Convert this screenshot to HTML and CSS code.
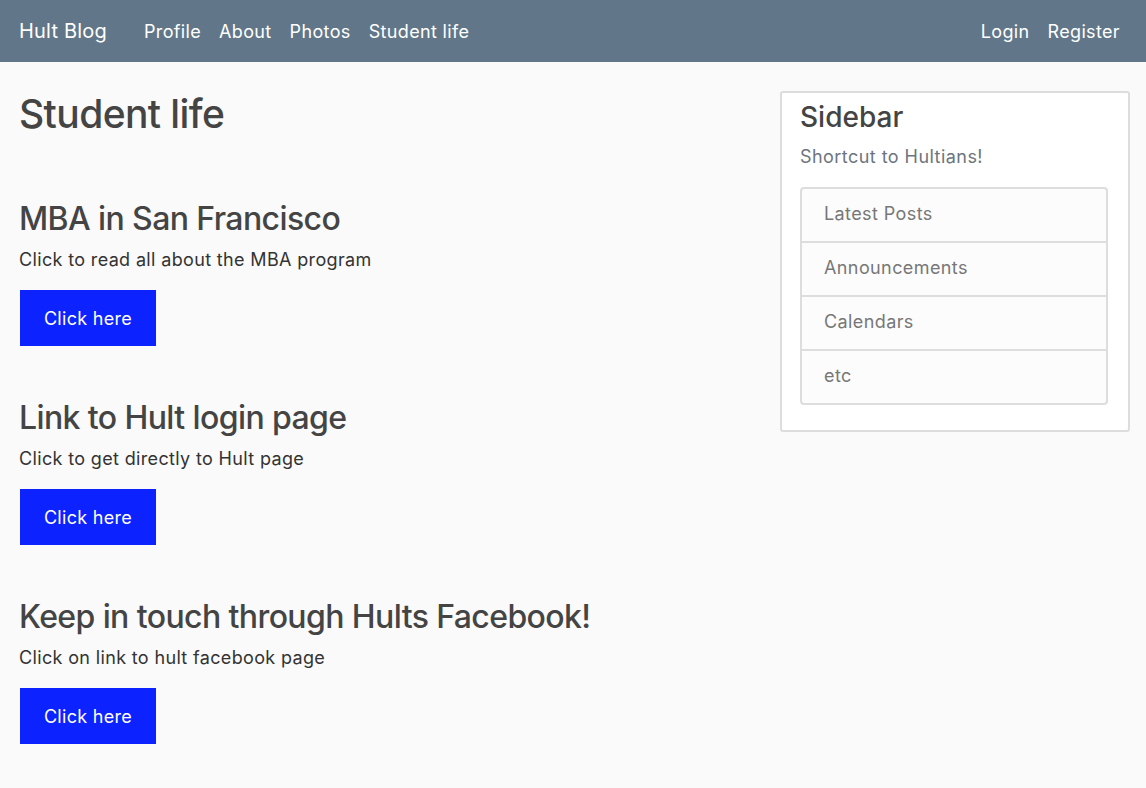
FILE: index.html
```html
<!DOCTYPE html>
<html lang="en">
<head>
<meta charset="utf-8">
<title>Hult Blog - Student life</title>
<link rel="stylesheet" href="styles.css">
</head>
<body>
<nav class="navbar">
  <div class="nav-left">
    <a class="brand" href="#">Hult Blog</a>
    <ul class="nav-links">
      <li><a href="#">Profile</a></li>
      <li><a href="#">About</a></li>
      <li><a href="#">Photos</a></li>
      <li><a href="#">Student life</a></li>
    </ul>
  </div>
  <ul class="nav-links nav-right">
    <li><a href="#">Login</a></li>
    <li><a href="#">Register</a></li>
  </ul>
</nav>
<div class="layout">
  <main class="main">
    <h1 class="page-title">Student life</h1>
    <section class="block">
      <h2 class="block-title">MBA in San Francisco</h2>
      <p class="block-text">Click to read all about the MBA program</p>
      <a class="btn" href="#">Click here</a>
    </section>
    <section class="block">
      <h2 class="block-title">Link to Hult login page</h2>
      <p class="block-text">Click to get directly to Hult page</p>
      <a class="btn" href="#">Click here</a>
    </section>
    <section class="block">
      <h2 class="block-title">Keep in touch through Hults Facebook!</h2>
      <p class="block-text">Click on link to hult facebook page</p>
      <a class="btn" href="#">Click here</a>
    </section>
  </main>
  <aside class="sidebar">
    <h3 class="sidebar-title">Sidebar</h3>
    <p class="sidebar-sub">Shortcut to Hultians!</p>
    <ul class="list-group">
      <li class="list-item">Latest Posts</li>
      <li class="list-item">Announcements</li>
      <li class="list-item">Calendars</li>
      <li class="list-item">etc</li>
    </ul>
  </aside>
</div>
</body>
</html>
```
FILE: styles.css
```css
* { box-sizing: border-box; }
html, body { margin: 0; padding: 0; }
body {
  background: #fafafa;
  font-family: Inter, "Noto Sans", sans-serif;
  font-size: 18px;
  line-height: 1.5;
  color: #333;
}
a { text-decoration: none; }
ul { list-style: none; margin: 0; padding: 0; }

.navbar {
  height: 62px;
  background: #617789;
  display: flex;
  align-items: center;
  justify-content: space-between;
  padding: 0 26px 0 19px;
}
.nav-left { display: flex; align-items: center; }
.brand {
  color: #fff;
  font-size: 20px;
  letter-spacing: 0.2px;
  margin-right: 37px;
}
.nav-links { display: flex; gap: 18px; }
.nav-links a { color: #fff; font-size: 18px; letter-spacing: 0.35px; }

.layout {
  display: flex;
  padding: 0 16px 0 19px;
  gap: 30px;
}
.main { flex: 1; padding-bottom: 40px; }
.page-title {
  margin: 29px 0 0;
  font-size: 39px;
  font-weight: 500;
  letter-spacing: -0.6px;
  line-height: 1.2;
  color: #444;
}
.block { margin-top: 62px; }
.block + .block { margin-top: 52.5px; }
.block-title {
  margin: 0;
  font-size: 32px;
  font-weight: 500;
  letter-spacing: -0.6px;
  line-height: 1.2;
  color: #444;
}
.block-text {
  margin: 8px 0 17px;
  font-size: 18px;
  letter-spacing: 0.35px;
  color: #333;
}
.btn {
  display: block;
  width: 136px;
  height: 56px;
  margin-left: 1px;
  padding-top: 2px;
  line-height: 54px;
  text-align: center;
  background: #0c23ff;
  color: #fff;
  font-size: 18px;
  letter-spacing: 0.3px;
}

.sidebar {
  width: 350px;
  margin-top: 29px;
  align-self: flex-start;
  background: #fff;
  border: 2px solid #ddd;
  border-radius: 3px;
  padding: 8px 20px 25px 18px;
}
.sidebar-title {
  margin: 0;
  font-size: 28px;
  font-weight: 500;
  line-height: 1.2;
  color: #444;
}
.sidebar-sub {
  margin: 8px 0 17px;
  font-size: 18px;
  letter-spacing: 0.45px;
  color: #6c757d;
}
.list-group {
  border: 2px solid #ddd;
  border-radius: 4px;
  background: #fcfcfc;
}
.list-item {
  padding: 11px 22px 14px;
  font-size: 18px;
  letter-spacing: 0.4px;
  color: #777;
  border-top: 2px solid #ddd;
}
.list-item:first-child { border-top: 0; }
```
